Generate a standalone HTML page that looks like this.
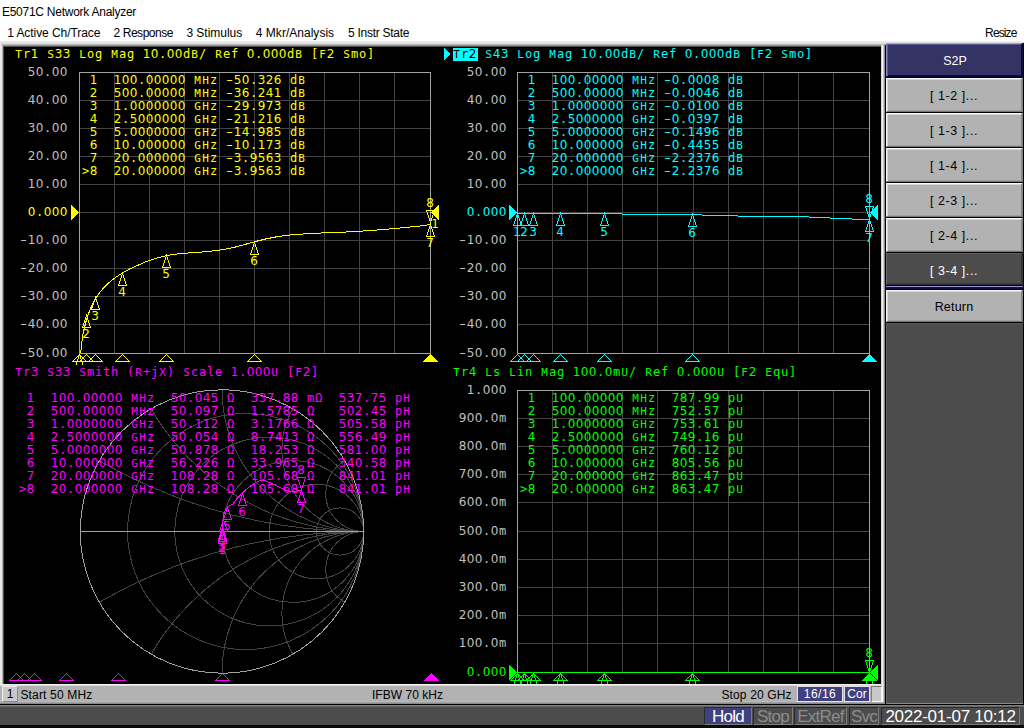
<!DOCTYPE html>
<html lang="en"><head><meta charset="utf-8"><title>E5071C Network Analyzer</title>
<style>
html,body{margin:0;padding:0;}
body{width:1024px;height:728px;overflow:hidden;background:#fff;position:relative;
 font-family:"Liberation Sans",sans-serif;color:#000;}
.abs{position:absolute;white-space:pre;}
#title{top:4px;line-height:16px;}
.menu{top:25px;line-height:16px;}
#frame{position:absolute;left:0;top:41px;width:1024px;height:664px;
 background:linear-gradient(#eeeeee 0,#e8e8e8 1px,#e2e2e2 2px,#dcdcdc 3px,#b8b8b8 3px,#b8b8b8 4px,#949494 4px,#949494 5px,#505050 5px,#505050 6px,#000 6px);}
#frameL{position:absolute;left:0;top:44px;width:4px;height:660px;
 background:linear-gradient(90deg,#e8e8e8 0,#e8e8e8 2px,#b0b0b0 2px,#b0b0b0 3px,#505050 3px,#505050 4px);
 clip-path:polygon(0 0,1px 0,4px 3px,4px 100%,0 100%);}
#frameR{position:absolute;left:881px;top:45px;width:5px;height:659px;
 background:linear-gradient(90deg,#d4d4d4 0,#d4d4d4 1px,#f6f6f6 1px,#f6f6f6 2px,#c6c6c6 2px,#c6c6c6 3px,#8e8e8e 3px,#8e8e8e 4px,#000 4px,#000 5px);}
#black{position:absolute;left:4px;top:47px;width:877px;height:637px;background:#000;overflow:hidden;}
#plot{position:absolute;left:0;top:0;width:1024px;height:728px;}
#plot text{font-family:"DejaVu Sans Mono","Liberation Mono",monospace;font-size:12.0px;white-space:pre;}
#plot .d{font-family:"DejaVu Sans","Liberation Sans",sans-serif;}
#plot .c{font-size:11.0px;}
#status{position:absolute;left:0;top:684px;width:881px;height:18px;box-sizing:border-box;
 background:linear-gradient(#f2f2f2 0,#f2f2f2 1px,#dadada 1px,#dadada 2px,#b2b2b2 2px,#b2b2b2 17px,#bababa 17px);}
#status>*{margin-top:2px;}
#frameB{position:absolute;left:0;top:702px;width:885px;height:2px;background:linear-gradient(#a0a0a0 0,#a0a0a0 1px,#8a8a8a 1px,#8a8a8a 2px);}
#status .abs{line-height:14px;top:2px;}
.sbox{position:absolute;top:0px;height:16px;box-sizing:border-box;font-size:12px;line-height:14px;
 text-align:center;color:#fff;background:#404080;border:1px solid #e4e4e4;white-space:pre;}
#bottom{position:absolute;left:0;top:704px;width:1024px;height:24px;box-sizing:border-box;
 background:linear-gradient(#000 0,#000 1px,#7e7e7e 1px,#7e7e7e 2px,#666 2px,#666 3px,#4c4c4c 3px);
 border-bottom:3px solid #0a0a0a;}
.bbox{position:absolute;top:3px;height:18px;box-sizing:border-box;font-size:17px;line-height:17px;
 text-align:center;border:1px solid #2a2a2a;border-right-color:#7c7c7c;border-bottom-color:#7c7c7c;
 color:#8c8c8c;background:#4c4c4c;white-space:pre;letter-spacing:-0.75px;}
#side{position:absolute;left:886px;top:43px;width:138px;height:661px;background:#000;}
.key{position:absolute;left:0;width:137px;height:34px;box-sizing:border-box;background:#b2b2b2;
 border-top:1px solid #fcfcfc;border-left:1px solid #f6f6f6;border-bottom:1px solid #767676;border-right:2px solid #868686;
 box-shadow:inset 1px 1px 0 #d6d6d6,inset 0 -1px 0 #a0a0a0;
 font-size:12.5px;line-height:34px;text-align:center;color:#000;white-space:pre;letter-spacing:0.55px;}
</style></head>
<body>
<div id="title" class="abs" style="left:1.90px;letter-spacing:-0.254px;font-size:12px;">E5071C Network Analyzer</div>
<div class="abs menu" style="left:7.20px;letter-spacing:-0.060px;font-size:12px;">1 Active Ch/Trace</div>
<div class="abs menu" style="left:113.60px;letter-spacing:-0.461px;font-size:12px;">2 Response</div>
<div class="abs menu" style="left:186.40px;letter-spacing:-0.026px;font-size:12px;">3 Stimulus</div>
<div class="abs menu" style="left:255.80px;letter-spacing:0.021px;font-size:12px;">4 Mkr/Analysis</div>
<div class="abs menu" style="left:348.10px;letter-spacing:-0.284px;font-size:12px;">5 Instr State</div>
<div class="abs menu" style="left:985.10px;letter-spacing:-0.878px;font-size:12px;">Resize</div>
<div id="frame"></div>
<div id="frameL"></div>
<div id="frameR"></div>
<div id="black"></div>
<div id="status">
 <div class="sbox" style="left:2px;width:16px;background:#c8c8c8;color:#000;border-color:#f0f0f0 #8c8c8c #8c8c8c #f0f0f0;">1</div>
 <div class="abs" style="left:20.40px;letter-spacing:0.170px;font-size:12px;">Start 50 MHz</div>
 <div class="abs" style="left:371.90px;letter-spacing:0.051px;font-size:12px;">IFBW 70 kHz</div>
 <div class="abs" style="left:721.40px;letter-spacing:0.150px;font-size:12px;">Stop 20 GHz</div>
 <div class="sbox" style="left:797px;width:46px;letter-spacing:0.5px;">16/16</div>
 <div class="sbox" style="left:844px;width:26px;">Cor</div>
 <div class="sbox" style="left:871px;width:11px;background:#c8c8c8;border-color:#7c7c7c #fafafa #fafafa #7c7c7c;"></div>
</div>
<div id="frameB"></div>
<div id="side">
<div class="key" style="top:0px;background:#333366;color:#fff;border-color:#a0a0d4 #0a0a3c #08083a #8888c0;box-shadow:inset 1px 1px 0 #5c5c94,inset 0 -1px 0 #0c0c40;line-height:35px;letter-spacing:0;padding-left:2px;">S2P</div>
<div class="key" style="top:35px;">[ 1-2 ]...</div>
<div class="key" style="top:70px;">[ 1-3 ]...</div>
<div class="key" style="top:105px;">[ 1-4 ]...</div>
<div class="key" style="top:140px;">[ 2-3 ]...</div>
<div class="key" style="top:175px;">[ 2-4 ]...</div>
<div class="key" style="top:210px;height:32px;background:#4c4c4c;color:#fff;border-color:#606060 #343434 #2c2c2c #6c6c6c;box-shadow:inset 0 -1px 0 #3c3c3c;line-height:34px;">[ 3-4 ]...</div>
<div style="position:absolute;left:0;top:243px;width:137px;height:3px;background:linear-gradient(#9494d4 0,#9494d4 1px,#16165c 1px,#0a0a3a 3px);"></div>
<div class="key" style="top:247px;height:32px;letter-spacing:0.2px;line-height:32px;">Return</div>
<div style="position:absolute;left:0;top:280px;width:137px;height:381px;background:#4c4c4c;border-left:1px solid #606060;border-top:1px solid #5a5a5a;border-bottom:1px solid #8a8a8a;box-sizing:border-box;"></div>
</div>
<div id="bottom">
 <div class="bbox" style="left:704px;width:48px;background:#404080;color:#fff;">Hold</div>
 <div class="bbox" style="left:753px;width:40px;">Stop</div>
 <div class="bbox" style="left:794px;width:53px;">ExtRef</div>
 <div class="bbox" style="left:849px;width:30px;">Svc</div>
 <div class="bbox" style="left:881px;width:139px;color:#fff;letter-spacing:-0.25px;">2022-01-07 10:12</div>
</div>
<svg id="plot" width="1024" height="728" viewBox="0 0 1024 728">
<defs><clipPath id="win"><rect x="4" y="47" width="877" height="637"/></clipPath></defs>
<g clip-path="url(#win)">
<g shape-rendering="crispEdges">
<rect x="114" y="72" width="1" height="282" fill="#444444"/>
<rect x="149" y="72" width="1" height="282" fill="#444444"/>
<rect x="184" y="72" width="1" height="282" fill="#444444"/>
<rect x="219" y="72" width="1" height="282" fill="#444444"/>
<rect x="254" y="72" width="1" height="282" fill="#444444"/>
<rect x="289" y="72" width="1" height="282" fill="#444444"/>
<rect x="324" y="72" width="1" height="282" fill="#444444"/>
<rect x="359" y="72" width="1" height="282" fill="#444444"/>
<rect x="394" y="72" width="1" height="282" fill="#444444"/>
<rect x="79" y="100" width="352" height="1" fill="#444444"/>
<rect x="79" y="128" width="352" height="1" fill="#444444"/>
<rect x="79" y="156" width="352" height="1" fill="#444444"/>
<rect x="79" y="184" width="352" height="1" fill="#444444"/>
<rect x="79" y="212" width="352" height="1" fill="#444444"/>
<rect x="79" y="240" width="352" height="1" fill="#444444"/>
<rect x="79" y="268" width="352" height="1" fill="#444444"/>
<rect x="79" y="296" width="352" height="1" fill="#444444"/>
<rect x="79" y="324" width="352" height="1" fill="#444444"/>
<rect x="79" y="72" width="352" height="1" fill="#a2a2a2"/>
<rect x="79" y="353" width="352" height="1" fill="#a2a2a2"/>
<rect x="79" y="72" width="1" height="282" fill="#a2a2a2"/>
<rect x="430" y="72" width="1" height="282" fill="#a2a2a2"/>
<polygon points="79.0,212.5 71.0,204.5 71.0,220.5" fill="#ffff00" stroke="none" stroke-width="1"/>
<polygon points="431.0,212.5 439.0,204.5 439.0,220.5" fill="#ffff00" stroke="none" stroke-width="1"/>
<polyline points="80.5,353.5 81.0,350.5 81.5,345.5 82.5,337.5 83.5,331.5 85.0,325.5 86.5,319.5 88.5,314.0 90.5,308.5 93.5,302.0 97.0,296.5 100.5,291.5 104.5,287.0 108.5,283.0 113.5,279.0 118.5,275.5 123.5,272.3 130.5,268.5 138.5,265.0 146.5,261.5 155.5,258.5 163.5,256.3 167.5,255.3 175.5,254.2 185.5,253.2 195.5,252.5 205.5,251.7 215.5,250.7 225.5,249.2 235.5,247.0 245.5,244.3 255.5,241.5 265.5,239.0 275.5,237.0 285.5,235.5 295.5,234.5 310.5,233.5 325.5,232.8 340.5,232.3 355.5,231.5 370.5,230.5 385.5,229.3 400.5,228.0 415.5,226.5 425.5,225.3 430.5,224.5" fill="none" stroke="#ffff00" stroke-width="1" stroke-linejoin="round"/>
<line x1="79.50" y1="354.50" x2="76.10" y2="364.50" stroke="#ffff00" stroke-width="1"/>
<line x1="79.50" y1="354.50" x2="82.90" y2="364.50" stroke="#ffff00" stroke-width="1"/>
<polygon points="86.5,315.5 82.5,327.5 90.5,327.5" fill="none" stroke="#ffff00" stroke-width="1"/>
<polygon points="95.5,297.5 91.5,309.5 99.5,309.5" fill="none" stroke="#ffff00" stroke-width="1"/>
<polygon points="122.5,273.5 118.5,285.5 126.5,285.5" fill="none" stroke="#ffff00" stroke-width="1"/>
<polygon points="166.5,255.5 162.5,267.5 170.5,267.5" fill="none" stroke="#ffff00" stroke-width="1"/>
<polygon points="254.5,242.5 250.5,254.5 258.5,254.5" fill="none" stroke="#ffff00" stroke-width="1"/>
<polygon points="430.5,224.5 426.5,236.5 434.5,236.5" fill="none" stroke="#ffff00" stroke-width="1"/>
<polygon points="430.5,222.5 426.5,210.5 434.5,210.5" fill="none" stroke="#ffff00" stroke-width="1"/>
<polygon points="79.5,354.5 72.5,361.5 86.5,361.5" fill="none" stroke="#ffff00" stroke-width="1"/>
<polygon points="86.5,354.5 79.5,361.5 93.5,361.5" fill="none" stroke="#ffff00" stroke-width="1"/>
<polygon points="95.5,354.5 88.5,361.5 102.5,361.5" fill="none" stroke="#ffff00" stroke-width="1"/>
<polygon points="122.5,354.5 115.5,361.5 129.5,361.5" fill="none" stroke="#ffff00" stroke-width="1"/>
<polygon points="166.5,354.5 159.5,361.5 173.5,361.5" fill="none" stroke="#ffff00" stroke-width="1"/>
<polygon points="254.5,354.5 247.5,361.5 261.5,361.5" fill="none" stroke="#ffff00" stroke-width="1"/>
<polygon points="430.5,354.4 422.8,362.0 438.2,362.0" fill="#ffff00" stroke="none" stroke-width="1"/>
<rect x="552" y="72" width="1" height="282" fill="#444444"/>
<rect x="587" y="72" width="1" height="282" fill="#444444"/>
<rect x="622" y="72" width="1" height="282" fill="#444444"/>
<rect x="657" y="72" width="1" height="282" fill="#444444"/>
<rect x="693" y="72" width="1" height="282" fill="#444444"/>
<rect x="728" y="72" width="1" height="282" fill="#444444"/>
<rect x="763" y="72" width="1" height="282" fill="#444444"/>
<rect x="798" y="72" width="1" height="282" fill="#444444"/>
<rect x="833" y="72" width="1" height="282" fill="#444444"/>
<rect x="517" y="100" width="353" height="1" fill="#444444"/>
<rect x="517" y="128" width="353" height="1" fill="#444444"/>
<rect x="517" y="156" width="353" height="1" fill="#444444"/>
<rect x="517" y="184" width="353" height="1" fill="#444444"/>
<rect x="517" y="212" width="353" height="1" fill="#444444"/>
<rect x="517" y="240" width="353" height="1" fill="#444444"/>
<rect x="517" y="268" width="353" height="1" fill="#444444"/>
<rect x="517" y="296" width="353" height="1" fill="#444444"/>
<rect x="517" y="324" width="353" height="1" fill="#444444"/>
<rect x="517" y="72" width="353" height="1" fill="#a2a2a2"/>
<rect x="517" y="353" width="353" height="1" fill="#a2a2a2"/>
<rect x="517" y="72" width="1" height="282" fill="#a2a2a2"/>
<rect x="869" y="72" width="1" height="282" fill="#a2a2a2"/>
<polygon points="444.0,48.0 444.0,60.0 450.5,54.0" fill="#00ffff" stroke="none" stroke-width="1"/>
<rect x="453" y="48" width="25" height="13" fill="#00ffff"/>
<polygon points="517.0,212.5 509.0,204.5 509.0,220.5" fill="#00ffff" stroke="none" stroke-width="1"/>
<polygon points="870.0,212.5 878.0,204.5 878.0,220.5" fill="#00ffff" stroke="none" stroke-width="1"/>
<polyline points="517.5,213.5 621.5,213.5 622.5,214.5 701.5,214.5 702.5,215.5 737.5,215.5 738.5,216.5 808.5,216.5 809.5,217.5 829.5,217.5 830.5,218.5 851.5,218.5 852.5,219.5 869.5,219.5" fill="none" stroke="#00ffff" stroke-width="1" stroke-linejoin="round"/>
<polygon points="517.5,213.5 513.5,225.5 521.5,225.5" fill="none" stroke="#00ffff" stroke-width="1"/>
<polygon points="524.5,213.5 520.5,225.5 528.5,225.5" fill="none" stroke="#00ffff" stroke-width="1"/>
<polygon points="533.5,213.5 529.5,225.5 537.5,225.5" fill="none" stroke="#00ffff" stroke-width="1"/>
<polygon points="560.5,213.5 556.5,225.5 564.5,225.5" fill="none" stroke="#00ffff" stroke-width="1"/>
<polygon points="604.5,213.5 600.5,225.5 608.5,225.5" fill="none" stroke="#00ffff" stroke-width="1"/>
<polygon points="692.5,214.5 688.5,226.5 696.5,226.5" fill="none" stroke="#00ffff" stroke-width="1"/>
<polygon points="869.5,219.5 865.5,231.5 873.5,231.5" fill="none" stroke="#00ffff" stroke-width="1"/>
<polygon points="869.5,218.5 865.5,206.5 873.5,206.5" fill="none" stroke="#00ffff" stroke-width="1"/>
<polygon points="517.5,354.5 510.5,361.5 524.5,361.5" fill="none" stroke="#00ffff" stroke-width="1"/>
<polygon points="524.5,354.5 517.5,361.5 531.5,361.5" fill="none" stroke="#00ffff" stroke-width="1"/>
<polygon points="533.5,354.5 526.5,361.5 540.5,361.5" fill="none" stroke="#00ffff" stroke-width="1"/>
<polygon points="560.5,354.5 553.5,361.5 567.5,361.5" fill="none" stroke="#00ffff" stroke-width="1"/>
<polygon points="604.5,354.5 597.5,361.5 611.5,361.5" fill="none" stroke="#00ffff" stroke-width="1"/>
<polygon points="692.5,354.5 685.5,361.5 699.5,361.5" fill="none" stroke="#00ffff" stroke-width="1"/>
<polygon points="869.5,354.4 861.8,362.0 877.2,362.0" fill="#00ffff" stroke="none" stroke-width="1"/>
<clipPath id="uc"><circle cx="222.0" cy="531.5" r="142.1"/></clipPath>
<g fill="none" stroke="#444444" stroke-width="1" clip-path="url(#uc)">
<circle cx="245.62" cy="531.50" r="118.08"/>
<circle cx="269.23" cy="531.50" r="94.47"/>
<circle cx="292.85" cy="531.50" r="70.85"/>
<circle cx="316.47" cy="531.50" r="47.23"/>
<circle cx="340.08" cy="531.50" r="23.62"/>
<circle cx="363.70" cy="493.53" r="37.97"/>
<circle cx="363.70" cy="569.47" r="37.97"/>
<circle cx="363.70" cy="449.69" r="81.81"/>
<circle cx="363.70" cy="613.31" r="81.81"/>
<circle cx="363.70" cy="389.80" r="141.70"/>
<circle cx="363.70" cy="673.20" r="141.70"/>
<circle cx="363.70" cy="286.07" r="245.43"/>
<circle cx="363.70" cy="776.93" r="245.43"/>
<circle cx="363.70" cy="2.67" r="528.83"/>
<circle cx="363.70" cy="1060.33" r="528.83"/>
</g>
<circle cx="222.0" cy="531.5" r="141.7" fill="none" stroke="#a2a2a2" stroke-width="1"/>
<rect x="80" y="531" width="284" height="1" fill="#a2a2a2"/>
<polyline points="222.0,532.0 222.3,529.3 222.5,527.0 223.1,519.2 224.0,513.5 225.5,509.5 227.7,506.9 230.5,505.3 233.0,504.0 236.8,498.9 241.3,494.0 245.5,490.0 250.4,486.0 255.5,482.5 261.0,480.1 264.0,480.3 267.0,481.5 271.5,483.3 276.1,485.3 280.5,487.8 285.2,490.1 289.5,491.1 294.2,491.3 298.0,490.8 301.8,490.1" fill="none" stroke="#ff00ff" stroke-width="1" stroke-linejoin="round"/>
<polygon points="222.5,531.5 218.5,543.5 226.5,543.5" fill="none" stroke="#ff00ff" stroke-width="1"/>
<polygon points="222.5,529.5 218.5,541.5 226.5,541.5" fill="none" stroke="#ff00ff" stroke-width="1"/>
<polygon points="222.5,527.5 218.5,539.5 226.5,539.5" fill="none" stroke="#ff00ff" stroke-width="1"/>
<polygon points="223.5,519.5 219.5,531.5 227.5,531.5" fill="none" stroke="#ff00ff" stroke-width="1"/>
<polygon points="227.5,507.5 223.5,519.5 231.5,519.5" fill="none" stroke="#ff00ff" stroke-width="1"/>
<polygon points="242.5,493.5 238.5,505.5 246.5,505.5" fill="none" stroke="#ff00ff" stroke-width="1"/>
<polygon points="301.5,490.5 297.5,502.5 305.5,502.5" fill="none" stroke="#ff00ff" stroke-width="1"/>
<polygon points="301.5,489.5 297.5,477.5 305.5,477.5" fill="none" stroke="#ff00ff" stroke-width="1"/>
<polygon points="16.5,673.5 9.5,680.5 23.5,680.5" fill="none" stroke="#ff00ff" stroke-width="1"/>
<polygon points="24.5,673.5 17.5,680.5 31.5,680.5" fill="none" stroke="#ff00ff" stroke-width="1"/>
<polygon points="34.5,673.5 27.5,680.5 41.5,680.5" fill="none" stroke="#ff00ff" stroke-width="1"/>
<polygon points="66.5,673.5 59.5,680.5 73.5,680.5" fill="none" stroke="#ff00ff" stroke-width="1"/>
<polygon points="118.5,673.5 111.5,680.5 125.5,680.5" fill="none" stroke="#ff00ff" stroke-width="1"/>
<polygon points="222.5,673.5 215.5,680.5 229.5,680.5" fill="none" stroke="#ff00ff" stroke-width="1"/>
<polygon points="431.5,673.4 423.8,681.0 439.2,681.0" fill="#ff00ff" stroke="none" stroke-width="1"/>
<rect x="552" y="390" width="1" height="283" fill="#444444"/>
<rect x="587" y="390" width="1" height="283" fill="#444444"/>
<rect x="622" y="390" width="1" height="283" fill="#444444"/>
<rect x="657" y="390" width="1" height="283" fill="#444444"/>
<rect x="693" y="390" width="1" height="283" fill="#444444"/>
<rect x="728" y="390" width="1" height="283" fill="#444444"/>
<rect x="763" y="390" width="1" height="283" fill="#444444"/>
<rect x="798" y="390" width="1" height="283" fill="#444444"/>
<rect x="833" y="390" width="1" height="283" fill="#444444"/>
<rect x="517" y="418" width="353" height="1" fill="#444444"/>
<rect x="517" y="446" width="353" height="1" fill="#444444"/>
<rect x="517" y="474" width="353" height="1" fill="#444444"/>
<rect x="517" y="502" width="353" height="1" fill="#444444"/>
<rect x="517" y="531" width="353" height="1" fill="#444444"/>
<rect x="517" y="559" width="353" height="1" fill="#444444"/>
<rect x="517" y="587" width="353" height="1" fill="#444444"/>
<rect x="517" y="615" width="353" height="1" fill="#444444"/>
<rect x="517" y="643" width="353" height="1" fill="#444444"/>
<rect x="517" y="390" width="353" height="1" fill="#a2a2a2"/>
<rect x="517" y="390" width="1" height="283" fill="#a2a2a2"/>
<rect x="869" y="390" width="1" height="283" fill="#a2a2a2"/>
<polygon points="517.5,673.5 513.5,685.5 521.5,685.5" fill="none" stroke="#00ff00" stroke-width="1"/>
<polygon points="524.5,673.5 520.5,685.5 528.5,685.5" fill="none" stroke="#00ff00" stroke-width="1"/>
<polygon points="533.5,673.5 529.5,685.5 537.5,685.5" fill="none" stroke="#00ff00" stroke-width="1"/>
<polygon points="560.5,673.5 556.5,685.5 564.5,685.5" fill="none" stroke="#00ff00" stroke-width="1"/>
<polygon points="604.5,673.5 600.5,685.5 608.5,685.5" fill="none" stroke="#00ff00" stroke-width="1"/>
<polygon points="692.5,673.5 688.5,685.5 696.5,685.5" fill="none" stroke="#00ff00" stroke-width="1"/>
<polygon points="869.5,673.5 865.5,685.5 873.5,685.5" fill="none" stroke="#00ff00" stroke-width="1"/>
<polygon points="869.5,672.5 865.5,660.5 873.5,660.5" fill="none" stroke="#00ff00" stroke-width="1"/>
<polygon points="517.5,673.5 510.5,680.5 524.5,680.5" fill="none" stroke="#00ff00" stroke-width="1"/>
<polygon points="524.5,673.5 517.5,680.5 531.5,680.5" fill="none" stroke="#00ff00" stroke-width="1"/>
<polygon points="533.5,673.5 526.5,680.5 540.5,680.5" fill="none" stroke="#00ff00" stroke-width="1"/>
<polygon points="560.5,673.5 553.5,680.5 567.5,680.5" fill="none" stroke="#00ff00" stroke-width="1"/>
<polygon points="604.5,673.5 597.5,680.5 611.5,680.5" fill="none" stroke="#00ff00" stroke-width="1"/>
<polygon points="692.5,673.5 685.5,680.5 699.5,680.5" fill="none" stroke="#00ff00" stroke-width="1"/>
<polygon points="869.5,673.4 861.8,681.0 877.2,681.0" fill="#00ff00" stroke="none" stroke-width="1"/>
<rect x="517" y="672" width="353" height="1" fill="#00ff00"/>
<polygon points="517.0,672.5 509.0,664.5 509.0,680.5" fill="#00ff00" stroke="none" stroke-width="1"/>
<polygon points="870.0,672.5 878.0,664.5 878.0,680.5" fill="#00ff00" stroke="none" stroke-width="1"/>
</g>
<g>
<text x="15.3 23 30.79 39 47.3 54.79 62.79 71 79.3 87 95 103 111.3 119 127 135 142.79 150.79 159 166.79 174.79 183 191.3 199 207 215.3 223 231 239 246.79 255 262.79 270.79 278.79 287 295.3 303 311 319.3 326.79 335 343.3 351 359 367" y="58.00" fill="#ffff00"><tspan class="c">T</tspan>r<tspan class="d">1</tspan> <tspan class="c">S</tspan><tspan class="d">33</tspan> <tspan class="c">L</tspan>og <tspan class="c">M</tspan>ag <tspan class="d">10</tspan>.<tspan class="d">00</tspan>d<tspan class="c">B</tspan>/ <tspan class="c">R</tspan>ef <tspan class="d">0</tspan>.<tspan class="d">000</tspan>d<tspan class="c">B</tspan> [<tspan class="c">F</tspan><tspan class="d">2</tspan> <tspan class="c">S</tspan>mo]</text>
<text x="27.79 35.79 44 51.79 59.79" y="76.00" fill="#c0c0c0"><tspan class="d">50</tspan>.<tspan class="d">00</tspan></text>
<text x="27.79 35.79 44 51.79 59.79" y="104.00" fill="#c0c0c0"><tspan class="d">40</tspan>.<tspan class="d">00</tspan></text>
<text x="27.79 35.79 44 51.79 59.79" y="132.00" fill="#c0c0c0"><tspan class="d">30</tspan>.<tspan class="d">00</tspan></text>
<text x="27.79 35.79 44 51.79 59.79" y="160.00" fill="#c0c0c0"><tspan class="d">20</tspan>.<tspan class="d">00</tspan></text>
<text x="27.79 35.79 44 51.79 59.79" y="188.00" fill="#c0c0c0"><tspan class="d">10</tspan>.<tspan class="d">00</tspan></text>
<text x="27.79 36 43.79 51.79 59.79" y="216.00" fill="#ffff00"><tspan class="d">0</tspan>.<tspan class="d">000</tspan></text>
<text x="17.75 27.79 35.79 44 51.79 59.79" y="244.00" fill="#c0c0c0"><tspan textLength="11.6" lengthAdjust="spacingAndGlyphs">-</tspan><tspan class="d">10</tspan>.<tspan class="d">00</tspan></text>
<text x="17.75 27.79 35.79 44 51.79 59.79" y="272.00" fill="#c0c0c0"><tspan textLength="11.6" lengthAdjust="spacingAndGlyphs">-</tspan><tspan class="d">20</tspan>.<tspan class="d">00</tspan></text>
<text x="17.75 27.79 35.79 44 51.79 59.79" y="300.00" fill="#c0c0c0"><tspan textLength="11.6" lengthAdjust="spacingAndGlyphs">-</tspan><tspan class="d">30</tspan>.<tspan class="d">00</tspan></text>
<text x="17.75 27.79 35.79 44 51.79 59.79" y="328.00" fill="#c0c0c0"><tspan textLength="11.6" lengthAdjust="spacingAndGlyphs">-</tspan><tspan class="d">40</tspan>.<tspan class="d">00</tspan></text>
<text x="17.75 27.79 35.79 44 51.79 59.79" y="357.00" fill="#c0c0c0"><tspan textLength="11.6" lengthAdjust="spacingAndGlyphs">-</tspan><tspan class="d">50</tspan>.<tspan class="d">00</tspan></text>
<text x="82.29" y="338.00" fill="#ffff00"><tspan class="d">2</tspan></text>
<text x="91.29" y="320.00" fill="#ffff00"><tspan class="d">3</tspan></text>
<text x="118.29" y="296.00" fill="#ffff00"><tspan class="d">4</tspan></text>
<text x="162.29" y="278.00" fill="#ffff00"><tspan class="d">5</tspan></text>
<text x="250.29" y="265.00" fill="#ffff00"><tspan class="d">6</tspan></text>
<text x="426.29" y="247.00" fill="#ffff00"><tspan class="d">7</tspan></text>
<text x="426.29" y="207.00" fill="#ffff00"><tspan class="d">8</tspan></text>
<text x="431.29" y="227.50" fill="#ffff00"><tspan class="d">1</tspan></text>
<text x="82 89.79 98 106 113.79 121.79 129.79 138 145.79 153.79 161.79 169.79 177.79 186 194.3 202.3 210 218 223.75 233.79 241.79 250 257.79 265.79 273.79 282 290 298.3" y="84.00" fill="#ffff00"> <tspan class="d">1</tspan>  <tspan class="d">100</tspan>.<tspan class="d">00000</tspan> <tspan class="c">MH</tspan>z <tspan textLength="11.6" lengthAdjust="spacingAndGlyphs">-</tspan><tspan class="d">50</tspan>.<tspan class="d">326</tspan> d<tspan class="c">B</tspan></text>
<text x="82 89.79 98 106 113.79 121.79 129.79 138 145.79 153.79 161.79 169.79 177.79 186 194.3 202.3 210 218 223.75 233.79 241.79 250 257.79 265.79 273.79 282 290 298.3" y="97.00" fill="#ffff00"> <tspan class="d">2</tspan>  <tspan class="d">500</tspan>.<tspan class="d">00000</tspan> <tspan class="c">MH</tspan>z <tspan textLength="11.6" lengthAdjust="spacingAndGlyphs">-</tspan><tspan class="d">36</tspan>.<tspan class="d">241</tspan> d<tspan class="c">B</tspan></text>
<text x="82 89.79 98 106 113.79 122 129.79 137.79 145.79 153.79 161.79 169.79 177.79 186 194.3 202.3 210 218 223.75 233.79 241.79 250 257.79 265.79 273.79 282 290 298.3" y="110.00" fill="#ffff00"> <tspan class="d">3</tspan>  <tspan class="d">1</tspan>.<tspan class="d">0000000</tspan> <tspan class="c">GH</tspan>z <tspan textLength="11.6" lengthAdjust="spacingAndGlyphs">-</tspan><tspan class="d">29</tspan>.<tspan class="d">973</tspan> d<tspan class="c">B</tspan></text>
<text x="82 89.79 98 106 113.79 122 129.79 137.79 145.79 153.79 161.79 169.79 177.79 186 194.3 202.3 210 218 223.75 233.79 241.79 250 257.79 265.79 273.79 282 290 298.3" y="123.00" fill="#ffff00"> <tspan class="d">4</tspan>  <tspan class="d">2</tspan>.<tspan class="d">5000000</tspan> <tspan class="c">GH</tspan>z <tspan textLength="11.6" lengthAdjust="spacingAndGlyphs">-</tspan><tspan class="d">21</tspan>.<tspan class="d">216</tspan> d<tspan class="c">B</tspan></text>
<text x="82 89.79 98 106 113.79 122 129.79 137.79 145.79 153.79 161.79 169.79 177.79 186 194.3 202.3 210 218 223.75 233.79 241.79 250 257.79 265.79 273.79 282 290 298.3" y="136.00" fill="#ffff00"> <tspan class="d">5</tspan>  <tspan class="d">5</tspan>.<tspan class="d">0000000</tspan> <tspan class="c">GH</tspan>z <tspan textLength="11.6" lengthAdjust="spacingAndGlyphs">-</tspan><tspan class="d">14</tspan>.<tspan class="d">985</tspan> d<tspan class="c">B</tspan></text>
<text x="82 89.79 98 106 113.79 121.79 130 137.79 145.79 153.79 161.79 169.79 177.79 186 194.3 202.3 210 218 223.75 233.79 241.79 250 257.79 265.79 273.79 282 290 298.3" y="149.00" fill="#ffff00"> <tspan class="d">6</tspan>  <tspan class="d">10</tspan>.<tspan class="d">000000</tspan> <tspan class="c">GH</tspan>z <tspan textLength="11.6" lengthAdjust="spacingAndGlyphs">-</tspan><tspan class="d">10</tspan>.<tspan class="d">173</tspan> d<tspan class="c">B</tspan></text>
<text x="82 89.79 98 106 113.79 121.79 130 137.79 145.79 153.79 161.79 169.79 177.79 186 194.3 202.3 210 218 223.75 233.79 242 249.79 257.79 265.79 273.79 282 290 298.3" y="162.00" fill="#ffff00"> <tspan class="d">7</tspan>  <tspan class="d">20</tspan>.<tspan class="d">000000</tspan> <tspan class="c">GH</tspan>z <tspan textLength="11.6" lengthAdjust="spacingAndGlyphs">-</tspan><tspan class="d">3</tspan>.<tspan class="d">9563</tspan> d<tspan class="c">B</tspan></text>
<text x="82 89.79 98 106 113.79 121.79 130 137.79 145.79 153.79 161.79 169.79 177.79 186 194.3 202.3 210 218 223.75 233.79 242 249.79 257.79 265.79 273.79 282 290 298.3" y="175.00" fill="#ffff00">&gt;<tspan class="d">8</tspan>  <tspan class="d">20</tspan>.<tspan class="d">000000</tspan> <tspan class="c">GH</tspan>z <tspan textLength="11.6" lengthAdjust="spacingAndGlyphs">-</tspan><tspan class="d">3</tspan>.<tspan class="d">9563</tspan> d<tspan class="c">B</tspan></text>
<text x="453.3 461 468.79" y="58.00" fill="#000000"><tspan class="c">T</tspan>r<tspan class="d">2</tspan></text>
<text x="485.3 492.79 500.79 509 517.3 525 533 541 549.3 557 565 573 580.79 588.79 597 604.79 612.79 621 629.3 637 645 653.3 661 669 677 684.79 693 700.79 708.79 716.79 725 733.3 741 749 757.3 764.79 773 781.3 789 797 805" y="58.00" fill="#00ffff"><tspan class="c">S</tspan><tspan class="d">43</tspan> <tspan class="c">L</tspan>og <tspan class="c">M</tspan>ag <tspan class="d">10</tspan>.<tspan class="d">00</tspan>d<tspan class="c">B</tspan>/ <tspan class="c">R</tspan>ef <tspan class="d">0</tspan>.<tspan class="d">000</tspan>d<tspan class="c">B</tspan> [<tspan class="c">F</tspan><tspan class="d">2</tspan> <tspan class="c">S</tspan>mo]</text>
<text x="466.79 474.79 483 490.79 498.79" y="76.00" fill="#c0c0c0"><tspan class="d">50</tspan>.<tspan class="d">00</tspan></text>
<text x="466.79 474.79 483 490.79 498.79" y="104.00" fill="#c0c0c0"><tspan class="d">40</tspan>.<tspan class="d">00</tspan></text>
<text x="466.79 474.79 483 490.79 498.79" y="132.00" fill="#c0c0c0"><tspan class="d">30</tspan>.<tspan class="d">00</tspan></text>
<text x="466.79 474.79 483 490.79 498.79" y="160.00" fill="#c0c0c0"><tspan class="d">20</tspan>.<tspan class="d">00</tspan></text>
<text x="466.79 474.79 483 490.79 498.79" y="188.00" fill="#c0c0c0"><tspan class="d">10</tspan>.<tspan class="d">00</tspan></text>
<text x="466.79 475 482.79 490.79 498.79" y="216.00" fill="#00ffff"><tspan class="d">0</tspan>.<tspan class="d">000</tspan></text>
<text x="456.75 466.79 474.79 483 490.79 498.79" y="244.00" fill="#c0c0c0"><tspan textLength="11.6" lengthAdjust="spacingAndGlyphs">-</tspan><tspan class="d">10</tspan>.<tspan class="d">00</tspan></text>
<text x="456.75 466.79 474.79 483 490.79 498.79" y="272.00" fill="#c0c0c0"><tspan textLength="11.6" lengthAdjust="spacingAndGlyphs">-</tspan><tspan class="d">20</tspan>.<tspan class="d">00</tspan></text>
<text x="456.75 466.79 474.79 483 490.79 498.79" y="300.00" fill="#c0c0c0"><tspan textLength="11.6" lengthAdjust="spacingAndGlyphs">-</tspan><tspan class="d">30</tspan>.<tspan class="d">00</tspan></text>
<text x="456.75 466.79 474.79 483 490.79 498.79" y="328.00" fill="#c0c0c0"><tspan textLength="11.6" lengthAdjust="spacingAndGlyphs">-</tspan><tspan class="d">40</tspan>.<tspan class="d">00</tspan></text>
<text x="456.75 466.79 474.79 483 490.79 498.79" y="357.00" fill="#c0c0c0"><tspan textLength="11.6" lengthAdjust="spacingAndGlyphs">-</tspan><tspan class="d">50</tspan>.<tspan class="d">00</tspan></text>
<text x="513.29" y="236.00" fill="#00ffff"><tspan class="d">1</tspan></text>
<text x="520.29" y="236.00" fill="#00ffff"><tspan class="d">2</tspan></text>
<text x="529.29" y="236.00" fill="#00ffff"><tspan class="d">3</tspan></text>
<text x="556.29" y="236.00" fill="#00ffff"><tspan class="d">4</tspan></text>
<text x="600.29" y="236.00" fill="#00ffff"><tspan class="d">5</tspan></text>
<text x="688.29" y="237.00" fill="#00ffff"><tspan class="d">6</tspan></text>
<text x="865.29" y="242.00" fill="#00ffff"><tspan class="d">7</tspan></text>
<text x="865.29" y="203.00" fill="#00ffff"><tspan class="d">8</tspan></text>
<text x="520 527.79 536 544 551.79 559.79 567.79 576 583.79 591.79 599.79 607.79 615.79 624 632.3 640.3 648 656 661.75 671.79 680 687.79 695.79 703.79 711.79 720 728 736.3" y="84.00" fill="#00ffff"> <tspan class="d">1</tspan>  <tspan class="d">100</tspan>.<tspan class="d">00000</tspan> <tspan class="c">MH</tspan>z <tspan textLength="11.6" lengthAdjust="spacingAndGlyphs">-</tspan><tspan class="d">0</tspan>.<tspan class="d">0008</tspan> d<tspan class="c">B</tspan></text>
<text x="520 527.79 536 544 551.79 559.79 567.79 576 583.79 591.79 599.79 607.79 615.79 624 632.3 640.3 648 656 661.75 671.79 680 687.79 695.79 703.79 711.79 720 728 736.3" y="97.00" fill="#00ffff"> <tspan class="d">2</tspan>  <tspan class="d">500</tspan>.<tspan class="d">00000</tspan> <tspan class="c">MH</tspan>z <tspan textLength="11.6" lengthAdjust="spacingAndGlyphs">-</tspan><tspan class="d">0</tspan>.<tspan class="d">0046</tspan> d<tspan class="c">B</tspan></text>
<text x="520 527.79 536 544 551.79 560 567.79 575.79 583.79 591.79 599.79 607.79 615.79 624 632.3 640.3 648 656 661.75 671.79 680 687.79 695.79 703.79 711.79 720 728 736.3" y="110.00" fill="#00ffff"> <tspan class="d">3</tspan>  <tspan class="d">1</tspan>.<tspan class="d">0000000</tspan> <tspan class="c">GH</tspan>z <tspan textLength="11.6" lengthAdjust="spacingAndGlyphs">-</tspan><tspan class="d">0</tspan>.<tspan class="d">0100</tspan> d<tspan class="c">B</tspan></text>
<text x="520 527.79 536 544 551.79 560 567.79 575.79 583.79 591.79 599.79 607.79 615.79 624 632.3 640.3 648 656 661.75 671.79 680 687.79 695.79 703.79 711.79 720 728 736.3" y="123.00" fill="#00ffff"> <tspan class="d">4</tspan>  <tspan class="d">2</tspan>.<tspan class="d">5000000</tspan> <tspan class="c">GH</tspan>z <tspan textLength="11.6" lengthAdjust="spacingAndGlyphs">-</tspan><tspan class="d">0</tspan>.<tspan class="d">0397</tspan> d<tspan class="c">B</tspan></text>
<text x="520 527.79 536 544 551.79 560 567.79 575.79 583.79 591.79 599.79 607.79 615.79 624 632.3 640.3 648 656 661.75 671.79 680 687.79 695.79 703.79 711.79 720 728 736.3" y="136.00" fill="#00ffff"> <tspan class="d">5</tspan>  <tspan class="d">5</tspan>.<tspan class="d">0000000</tspan> <tspan class="c">GH</tspan>z <tspan textLength="11.6" lengthAdjust="spacingAndGlyphs">-</tspan><tspan class="d">0</tspan>.<tspan class="d">1496</tspan> d<tspan class="c">B</tspan></text>
<text x="520 527.79 536 544 551.79 559.79 568 575.79 583.79 591.79 599.79 607.79 615.79 624 632.3 640.3 648 656 661.75 671.79 680 687.79 695.79 703.79 711.79 720 728 736.3" y="149.00" fill="#00ffff"> <tspan class="d">6</tspan>  <tspan class="d">10</tspan>.<tspan class="d">000000</tspan> <tspan class="c">GH</tspan>z <tspan textLength="11.6" lengthAdjust="spacingAndGlyphs">-</tspan><tspan class="d">0</tspan>.<tspan class="d">4455</tspan> d<tspan class="c">B</tspan></text>
<text x="520 527.79 536 544 551.79 559.79 568 575.79 583.79 591.79 599.79 607.79 615.79 624 632.3 640.3 648 656 661.75 671.79 680 687.79 695.79 703.79 711.79 720 728 736.3" y="162.00" fill="#00ffff"> <tspan class="d">7</tspan>  <tspan class="d">20</tspan>.<tspan class="d">000000</tspan> <tspan class="c">GH</tspan>z <tspan textLength="11.6" lengthAdjust="spacingAndGlyphs">-</tspan><tspan class="d">2</tspan>.<tspan class="d">2376</tspan> d<tspan class="c">B</tspan></text>
<text x="520 527.79 536 544 551.79 559.79 568 575.79 583.79 591.79 599.79 607.79 615.79 624 632.3 640.3 648 656 661.75 671.79 680 687.79 695.79 703.79 711.79 720 728 736.3" y="175.00" fill="#00ffff">&gt;<tspan class="d">8</tspan>  <tspan class="d">20</tspan>.<tspan class="d">000000</tspan> <tspan class="c">GH</tspan>z <tspan textLength="11.6" lengthAdjust="spacingAndGlyphs">-</tspan><tspan class="d">2</tspan>.<tspan class="d">2376</tspan> d<tspan class="c">B</tspan></text>
<text x="15.3 23 30.79 39 47.3 54.79 62.79 71 79.3 87 95 103 111 119 127 135.3 143 151 159.3 167 175 183.3 191 199 207 215 223 230.79 239 246.79 254.79 262.79 271.3 279 287 295.3 302.79 311" y="376.00" fill="#ff00ff"><tspan class="c">T</tspan>r<tspan class="d">3</tspan> <tspan class="c">S</tspan><tspan class="d">33</tspan> <tspan class="c">S</tspan>mith (<tspan class="c">R</tspan>+j<tspan class="c">X</tspan>) <tspan class="c">S</tspan>cale <tspan class="d">1</tspan>.<tspan class="d">000</tspan><tspan class="c">U</tspan> [<tspan class="c">F</tspan><tspan class="d">2</tspan>]</text>
<text x="218.29" y="554.00" fill="#ff00ff"><tspan class="d">1</tspan></text>
<text x="218.29" y="552.00" fill="#ff00ff"><tspan class="d">2</tspan></text>
<text x="218.29" y="550.00" fill="#ff00ff"><tspan class="d">3</tspan></text>
<text x="219.29" y="542.00" fill="#ff00ff"><tspan class="d">4</tspan></text>
<text x="223.29" y="530.00" fill="#ff00ff"><tspan class="d">5</tspan></text>
<text x="238.29" y="516.00" fill="#ff00ff"><tspan class="d">6</tspan></text>
<text x="297.29" y="513.00" fill="#ff00ff"><tspan class="d">7</tspan></text>
<text x="297.29" y="474.00" fill="#ff00ff"><tspan class="d">8</tspan></text>
<text x="19 26.79 35 43 50.79 58.79 66.79 75 82.79 90.79 98.79 106.79 114.79 123 131.3 139.3 147 155 163 170.79 178.79 187 194.79 202.79 210.79 219 227 235 243 250.79 258.79 266.79 275 282.79 290.79 299 307 315 323 331 338.79 346.79 354.79 363 370.79 378.79 387 395 403.3" y="402.00" fill="#ff00ff"> <tspan class="d">1</tspan>  <tspan class="d">100</tspan>.<tspan class="d">00000</tspan> <tspan class="c">MH</tspan>z  <tspan class="d">50</tspan>.<tspan class="d">045</tspan> Ω  <tspan class="d">337</tspan>.<tspan class="d">88</tspan> mΩ  <tspan class="d">537</tspan>.<tspan class="d">75</tspan> p<tspan class="c">H</tspan></text>
<text x="19 26.79 35 43 50.79 58.79 66.79 75 82.79 90.79 98.79 106.79 114.79 123 131.3 139.3 147 155 163 170.79 178.79 187 194.79 202.79 210.79 219 227 235 243 250.79 259 266.79 274.79 282.79 290.79 299 307 315 323 331 338.79 346.79 354.79 363 370.79 378.79 387 395 403.3" y="415.00" fill="#ff00ff"> <tspan class="d">2</tspan>  <tspan class="d">500</tspan>.<tspan class="d">00000</tspan> <tspan class="c">MH</tspan>z  <tspan class="d">50</tspan>.<tspan class="d">097</tspan> Ω  <tspan class="d">1</tspan>.<tspan class="d">5785</tspan> Ω   <tspan class="d">502</tspan>.<tspan class="d">45</tspan> p<tspan class="c">H</tspan></text>
<text x="19 26.79 35 43 50.79 59 66.79 74.79 82.79 90.79 98.79 106.79 114.79 123 131.3 139.3 147 155 163 170.79 178.79 187 194.79 202.79 210.79 219 227 235 243 250.79 259 266.79 274.79 282.79 290.79 299 307 315 323 331 338.79 346.79 354.79 363 370.79 378.79 387 395 403.3" y="428.00" fill="#ff00ff"> <tspan class="d">3</tspan>  <tspan class="d">1</tspan>.<tspan class="d">0000000</tspan> <tspan class="c">GH</tspan>z  <tspan class="d">50</tspan>.<tspan class="d">112</tspan> Ω  <tspan class="d">3</tspan>.<tspan class="d">1766</tspan> Ω   <tspan class="d">505</tspan>.<tspan class="d">58</tspan> p<tspan class="c">H</tspan></text>
<text x="19 26.79 35 43 50.79 59 66.79 74.79 82.79 90.79 98.79 106.79 114.79 123 131.3 139.3 147 155 163 170.79 178.79 187 194.79 202.79 210.79 219 227 235 243 250.79 259 266.79 274.79 282.79 290.79 299 307 315 323 331 338.79 346.79 354.79 363 370.79 378.79 387 395 403.3" y="441.00" fill="#ff00ff"> <tspan class="d">4</tspan>  <tspan class="d">2</tspan>.<tspan class="d">5000000</tspan> <tspan class="c">GH</tspan>z  <tspan class="d">50</tspan>.<tspan class="d">054</tspan> Ω  <tspan class="d">8</tspan>.<tspan class="d">7413</tspan> Ω   <tspan class="d">556</tspan>.<tspan class="d">49</tspan> p<tspan class="c">H</tspan></text>
<text x="19 26.79 35 43 50.79 59 66.79 74.79 82.79 90.79 98.79 106.79 114.79 123 131.3 139.3 147 155 163 170.79 178.79 187 194.79 202.79 210.79 219 227 235 243 250.79 258.79 267 274.79 282.79 290.79 299 307 315 323 331 338.79 346.79 354.79 363 370.79 378.79 387 395 403.3" y="454.00" fill="#ff00ff"> <tspan class="d">5</tspan>  <tspan class="d">5</tspan>.<tspan class="d">0000000</tspan> <tspan class="c">GH</tspan>z  <tspan class="d">50</tspan>.<tspan class="d">878</tspan> Ω  <tspan class="d">18</tspan>.<tspan class="d">253</tspan> Ω   <tspan class="d">581</tspan>.<tspan class="d">00</tspan> p<tspan class="c">H</tspan></text>
<text x="19 26.79 35 43 50.79 58.79 67 74.79 82.79 90.79 98.79 106.79 114.79 123 131.3 139.3 147 155 163 170.79 178.79 187 194.79 202.79 210.79 219 227 235 243 250.79 258.79 267 274.79 282.79 290.79 299 307 315 323 331 338.79 346.79 354.79 363 370.79 378.79 387 395 403.3" y="467.00" fill="#ff00ff"> <tspan class="d">6</tspan>  <tspan class="d">10</tspan>.<tspan class="d">000000</tspan> <tspan class="c">GH</tspan>z  <tspan class="d">56</tspan>.<tspan class="d">226</tspan> Ω  <tspan class="d">33</tspan>.<tspan class="d">965</tspan> Ω   <tspan class="d">340</tspan>.<tspan class="d">58</tspan> p<tspan class="c">H</tspan></text>
<text x="19 26.79 35 43 50.79 58.79 67 74.79 82.79 90.79 98.79 106.79 114.79 123 131.3 139.3 147 155 163 170.79 178.79 186.79 195 202.79 210.79 219 227 235 243 250.79 258.79 266.79 275 282.79 290.79 299 307 315 323 331 338.79 346.79 354.79 363 370.79 378.79 387 395 403.3" y="480.00" fill="#ff00ff"> <tspan class="d">7</tspan>  <tspan class="d">20</tspan>.<tspan class="d">000000</tspan> <tspan class="c">GH</tspan>z  <tspan class="d">108</tspan>.<tspan class="d">28</tspan> Ω  <tspan class="d">105</tspan>.<tspan class="d">68</tspan> Ω   <tspan class="d">841</tspan>.<tspan class="d">01</tspan> p<tspan class="c">H</tspan></text>
<text x="19 26.79 35 43 50.79 58.79 67 74.79 82.79 90.79 98.79 106.79 114.79 123 131.3 139.3 147 155 163 170.79 178.79 186.79 195 202.79 210.79 219 227 235 243 250.79 258.79 266.79 275 282.79 290.79 299 307 315 323 331 338.79 346.79 354.79 363 370.79 378.79 387 395 403.3" y="493.00" fill="#ff00ff">&gt;<tspan class="d">8</tspan>  <tspan class="d">20</tspan>.<tspan class="d">000000</tspan> <tspan class="c">GH</tspan>z  <tspan class="d">108</tspan>.<tspan class="d">28</tspan> Ω  <tspan class="d">105</tspan>.<tspan class="d">68</tspan> Ω   <tspan class="d">841</tspan>.<tspan class="d">01</tspan> p<tspan class="c">H</tspan></text>
<text x="453.3 461 468.79 477 485.3 493 501 509.3 517 525 533 541.3 549 557 565 572.79 580.79 588.79 597 604.79 613 621.3 629 637 645.3 653 661 669 676.79 685 692.79 700.79 708.79 717.3 725 733 741.3 748.79 757 765.3 773 781 789" y="376.00" fill="#00ff00"><tspan class="c">T</tspan>r<tspan class="d">4</tspan> <tspan class="c">L</tspan>s <tspan class="c">L</tspan>in <tspan class="c">M</tspan>ag <tspan class="d">100</tspan>.<tspan class="d">0</tspan>m<tspan class="c">U</tspan>/ <tspan class="c">R</tspan>ef <tspan class="d">0</tspan>.<tspan class="d">000</tspan><tspan class="c">U</tspan> [<tspan class="c">F</tspan><tspan class="d">2</tspan> <tspan class="c">E</tspan>qu]</text>
<text x="466.79 475 482.79 490.79 498.79" y="394.00" fill="#c0c0c0"><tspan class="d">1</tspan>.<tspan class="d">000</tspan></text>
<text x="458.79 466.79 474.79 483 490.79 499" y="422.00" fill="#c0c0c0"><tspan class="d">900</tspan>.<tspan class="d">0</tspan>m</text>
<text x="458.79 466.79 474.79 483 490.79 499" y="450.00" fill="#c0c0c0"><tspan class="d">800</tspan>.<tspan class="d">0</tspan>m</text>
<text x="458.79 466.79 474.79 483 490.79 499" y="478.00" fill="#c0c0c0"><tspan class="d">700</tspan>.<tspan class="d">0</tspan>m</text>
<text x="458.79 466.79 474.79 483 490.79 499" y="506.00" fill="#c0c0c0"><tspan class="d">600</tspan>.<tspan class="d">0</tspan>m</text>
<text x="458.79 466.79 474.79 483 490.79 499" y="535.00" fill="#c0c0c0"><tspan class="d">500</tspan>.<tspan class="d">0</tspan>m</text>
<text x="458.79 466.79 474.79 483 490.79 499" y="563.00" fill="#c0c0c0"><tspan class="d">400</tspan>.<tspan class="d">0</tspan>m</text>
<text x="458.79 466.79 474.79 483 490.79 499" y="591.00" fill="#c0c0c0"><tspan class="d">300</tspan>.<tspan class="d">0</tspan>m</text>
<text x="458.79 466.79 474.79 483 490.79 499" y="619.00" fill="#c0c0c0"><tspan class="d">200</tspan>.<tspan class="d">0</tspan>m</text>
<text x="458.79 466.79 474.79 483 490.79 499" y="647.00" fill="#c0c0c0"><tspan class="d">100</tspan>.<tspan class="d">0</tspan>m</text>
<text x="466.79 475 482.79 490.79 498.79" y="676.00" fill="#00ff00"><tspan class="d">0</tspan>.<tspan class="d">000</tspan></text>
<text x="865.29" y="657.00" fill="#00ff00"><tspan class="d">8</tspan></text>
<text x="520 527.79 536 544 551.79 559.79 567.79 576 583.79 591.79 599.79 607.79 615.79 624 632.3 640.3 648 656 664 671.79 679.79 687.79 696 703.79 711.79 720 728 736.3" y="402.00" fill="#00ff00"> <tspan class="d">1</tspan>  <tspan class="d">100</tspan>.<tspan class="d">00000</tspan> <tspan class="c">MH</tspan>z  <tspan class="d">787</tspan>.<tspan class="d">99</tspan> p<tspan class="c">U</tspan></text>
<text x="520 527.79 536 544 551.79 559.79 567.79 576 583.79 591.79 599.79 607.79 615.79 624 632.3 640.3 648 656 664 671.79 679.79 687.79 696 703.79 711.79 720 728 736.3" y="415.00" fill="#00ff00"> <tspan class="d">2</tspan>  <tspan class="d">500</tspan>.<tspan class="d">00000</tspan> <tspan class="c">MH</tspan>z  <tspan class="d">752</tspan>.<tspan class="d">57</tspan> p<tspan class="c">U</tspan></text>
<text x="520 527.79 536 544 551.79 560 567.79 575.79 583.79 591.79 599.79 607.79 615.79 624 632.3 640.3 648 656 664 671.79 679.79 687.79 696 703.79 711.79 720 728 736.3" y="428.00" fill="#00ff00"> <tspan class="d">3</tspan>  <tspan class="d">1</tspan>.<tspan class="d">0000000</tspan> <tspan class="c">GH</tspan>z  <tspan class="d">753</tspan>.<tspan class="d">61</tspan> p<tspan class="c">U</tspan></text>
<text x="520 527.79 536 544 551.79 560 567.79 575.79 583.79 591.79 599.79 607.79 615.79 624 632.3 640.3 648 656 664 671.79 679.79 687.79 696 703.79 711.79 720 728 736.3" y="441.00" fill="#00ff00"> <tspan class="d">4</tspan>  <tspan class="d">2</tspan>.<tspan class="d">5000000</tspan> <tspan class="c">GH</tspan>z  <tspan class="d">749</tspan>.<tspan class="d">16</tspan> p<tspan class="c">U</tspan></text>
<text x="520 527.79 536 544 551.79 560 567.79 575.79 583.79 591.79 599.79 607.79 615.79 624 632.3 640.3 648 656 664 671.79 679.79 687.79 696 703.79 711.79 720 728 736.3" y="454.00" fill="#00ff00"> <tspan class="d">5</tspan>  <tspan class="d">5</tspan>.<tspan class="d">0000000</tspan> <tspan class="c">GH</tspan>z  <tspan class="d">760</tspan>.<tspan class="d">12</tspan> p<tspan class="c">U</tspan></text>
<text x="520 527.79 536 544 551.79 559.79 568 575.79 583.79 591.79 599.79 607.79 615.79 624 632.3 640.3 648 656 664 671.79 679.79 687.79 696 703.79 711.79 720 728 736.3" y="467.00" fill="#00ff00"> <tspan class="d">6</tspan>  <tspan class="d">10</tspan>.<tspan class="d">000000</tspan> <tspan class="c">GH</tspan>z  <tspan class="d">805</tspan>.<tspan class="d">56</tspan> p<tspan class="c">U</tspan></text>
<text x="520 527.79 536 544 551.79 559.79 568 575.79 583.79 591.79 599.79 607.79 615.79 624 632.3 640.3 648 656 664 671.79 679.79 687.79 696 703.79 711.79 720 728 736.3" y="480.00" fill="#00ff00"> <tspan class="d">7</tspan>  <tspan class="d">20</tspan>.<tspan class="d">000000</tspan> <tspan class="c">GH</tspan>z  <tspan class="d">863</tspan>.<tspan class="d">47</tspan> p<tspan class="c">U</tspan></text>
<text x="520 527.79 536 544 551.79 559.79 568 575.79 583.79 591.79 599.79 607.79 615.79 624 632.3 640.3 648 656 664 671.79 679.79 687.79 696 703.79 711.79 720 728 736.3" y="493.00" fill="#00ff00">&gt;<tspan class="d">8</tspan>  <tspan class="d">20</tspan>.<tspan class="d">000000</tspan> <tspan class="c">GH</tspan>z  <tspan class="d">863</tspan>.<tspan class="d">47</tspan> p<tspan class="c">U</tspan></text>
</g>
</g>
</svg>
</body></html>
